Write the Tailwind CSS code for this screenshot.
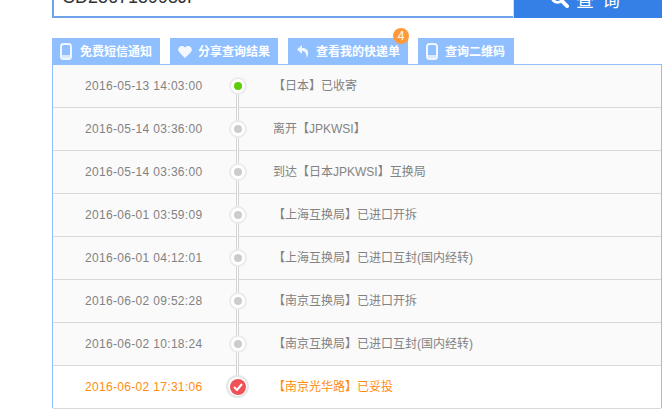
<!DOCTYPE html>
<html>
<head>
<meta charset="utf-8">
<script src="https://cdn.jsdelivr.net/npm/@tailwindcss/browser@4"></script>
</head>
<body class="bg-white overflow-hidden font-['Liberation_Sans','Noto_Sans_CJK_SC',sans-serif]">
<div class="w-[671px] h-[418px] overflow-hidden pl-[52px]">
  <div class="w-[610px] h-[18px] flex items-end overflow-hidden">
    <div class="w-[461px] h-[18px] border-2 border-t-0 border-r-0 border-[#6ea3ea] border-b-2 bg-white relative overflow-hidden">
      <span class="absolute left-[8px] bottom-[7px] text-[18px] leading-[24px] text-[#333]">CD256715998JP</span>
    </div>
    <div class="w-[149px] h-[18px] bg-[#3480e6] border-l border-[#cfdcec] relative overflow-hidden text-white">
      <svg class="absolute left-[36px] top-[-11px]" width="19" height="19" viewBox="0 0 20 20" fill="none" stroke="white" stroke-width="3"><circle cx="8" cy="8" r="6"/><path d="M12.5 12.5 L18 18" stroke-width="4" stroke-linecap="round"/></svg>
      <span class="absolute left-[62px] bottom-[7px] text-[18px] leading-[20px] tracking-[8px]">查询</span>
    </div>
  </div>
  <div class="h-[20px]"></div>
  <div class="flex gap-[10px] h-[26px] w-[610px]">
    <div class="w-[108px] bg-[#8fbfff] flex items-center pl-[8px] gap-[8px] pt-[1px] text-white text-[12px] font-bold">
      <svg width="12" height="17" viewBox="0 0 12 17" fill="none"><rect x="1" y="1" width="10" height="15" rx="2.5" stroke="#eef6ff" stroke-width="2"/><rect x="2" y="12" width="8" height="3" fill="#d9e9ff"/></svg>
      <span>免费短信通知</span>
    </div>
    <div class="w-[108px] bg-[#8fbfff] flex items-center pl-[8px] gap-[6px] pt-[1px] text-white text-[12px] font-bold">
      <svg width="14" height="12" viewBox="0 0 14 12" fill="#f4f8ff"><path d="M7 12 L1 6 C-1 3 1 0 4 0 C5.4 0 6.4 .7 7 1.7 C7.6 .7 8.6 0 10 0 C13 0 15 3 13 6 Z"/></svg>
      <span>分享查询结果</span>
    </div>
    <div class="w-[120px] bg-[#8fbfff] flex items-center pl-[9px] gap-[7px] pt-[1px] text-white text-[12px] font-bold relative">
      <svg width="12" height="13" viewBox="0 0 12 13" fill="#f0f6ff"><path d="M5 0 L0 4.5 L5 9 V6 C8 6 9.5 8 9.5 13 C12 9 12.5 3 5 3 Z"/></svg>
      <span>查看我的快递单</span>
      <div class="absolute right-[-1px] top-[-10px] w-4 h-4 rounded-full bg-[#ff9a3c] text-white text-[12px] font-normal flex items-center justify-center leading-none">4</div>
    </div>
    <div class="w-[96px] bg-[#8fbfff] flex items-center pl-[8px] gap-[7px] pt-[1px] text-white text-[12px] font-bold">
      <svg width="12" height="17" viewBox="0 0 12 17" fill="none"><rect x="1" y="1" width="10" height="15" rx="2.5" stroke="#eef6ff" stroke-width="2"/><rect x="2" y="12" width="8" height="3" fill="#d9e9ff"/></svg>
      <span>查询二维码</span>
    </div>
  </div>
  <div class="w-[610px] border border-[#8fbfff] border-b-0 text-[12px] text-[#828282] relative h-[344px]">
    <div class="absolute z-10 left-[183px] top-[22px] w-[3px] h-[292px] bg-white border-x border-[#d4d4d4]"></div>
    <div class="h-[43px] bg-[#fafafa] border-b border-[#d9d9d9] flex items-center relative"><span class="w-[220px] pl-[32px] tracking-[0.32px]">2016-05-13 14:03:00</span><span>【日本】已收寄</span><div class="absolute z-20 left-[176px] top-[12px] w-[18px] h-[18px] rounded-full bg-white border-2 border-[#ebebeb] flex items-center justify-center"><div class="w-[8px] h-[8px] rounded-full bg-[#5fcc08]"></div></div></div>
    <div class="h-[43px] bg-[#fafafa] border-b border-[#d9d9d9] flex items-center relative"><span class="w-[220px] pl-[32px] tracking-[0.32px]">2016-05-14 03:36:00</span><span>离开【JPKWSI】</span><div class="absolute z-20 left-[176px] top-[12px] w-[18px] h-[18px] rounded-full bg-white border-2 border-[#ebebeb] flex items-center justify-center"><div class="w-[8px] h-[8px] rounded-full bg-[#cccccc]"></div></div></div>
    <div class="h-[43px] bg-[#fafafa] border-b border-[#d9d9d9] flex items-center relative"><span class="w-[220px] pl-[32px] tracking-[0.32px]">2016-05-14 03:36:00</span><span>到达【日本JPKWSI】互换局</span><div class="absolute z-20 left-[176px] top-[12px] w-[18px] h-[18px] rounded-full bg-white border-2 border-[#ebebeb] flex items-center justify-center"><div class="w-[8px] h-[8px] rounded-full bg-[#cccccc]"></div></div></div>
    <div class="h-[43px] bg-[#fafafa] border-b border-[#d9d9d9] flex items-center relative"><span class="w-[220px] pl-[32px] tracking-[0.32px]">2016-06-01 03:59:09</span><span>【上海互换局】已进口开拆</span><div class="absolute z-20 left-[176px] top-[12px] w-[18px] h-[18px] rounded-full bg-white border-2 border-[#ebebeb] flex items-center justify-center"><div class="w-[8px] h-[8px] rounded-full bg-[#cccccc]"></div></div></div>
    <div class="h-[43px] bg-[#fafafa] border-b border-[#d9d9d9] flex items-center relative"><span class="w-[220px] pl-[32px] tracking-[0.32px]">2016-06-01 04:12:01</span><span>【上海互换局】已进口互封(国内经转)</span><div class="absolute z-20 left-[176px] top-[12px] w-[18px] h-[18px] rounded-full bg-white border-2 border-[#ebebeb] flex items-center justify-center"><div class="w-[8px] h-[8px] rounded-full bg-[#cccccc]"></div></div></div>
    <div class="h-[43px] bg-[#fafafa] border-b border-[#d9d9d9] flex items-center relative"><span class="w-[220px] pl-[32px] tracking-[0.32px]">2016-06-02 09:52:28</span><span>【南京互换局】已进口开拆</span><div class="absolute z-20 left-[176px] top-[12px] w-[18px] h-[18px] rounded-full bg-white border-2 border-[#ebebeb] flex items-center justify-center"><div class="w-[8px] h-[8px] rounded-full bg-[#cccccc]"></div></div></div>
    <div class="h-[43px] bg-[#fafafa] border-b border-[#d9d9d9] flex items-center relative"><span class="w-[220px] pl-[32px] tracking-[0.32px]">2016-06-02 10:18:24</span><span>【南京互换局】已进口互封(国内经转)</span><div class="absolute z-20 left-[176px] top-[12px] w-[18px] h-[18px] rounded-full bg-white border-2 border-[#ebebeb] flex items-center justify-center"><div class="w-[8px] h-[8px] rounded-full bg-[#cccccc]"></div></div></div>
    <div class="h-[43px] bg-white border-b border-[#d9d9d9] flex items-center relative text-[#ff8c0f]"><span class="w-[220px] pl-[32px] tracking-[0.32px]">2016-06-02 17:31:06</span><span>【南京光华路】已妥投</span><div class="absolute z-20 left-[173px] top-[9px] w-[23px] h-[23px] rounded-full bg-white border-2 border-[#e6e6e6] flex items-center justify-center"><div class="w-[16px] h-[16px] rounded-full bg-[#ee5257] flex items-center justify-center"><svg width="10" height="8" viewBox="0 0 10 8" fill="none" stroke="white" stroke-width="2"><path d="M1 4 L4 7 L9 1"/></svg></div></div></div>
  </div>
</div>
</body>
</html>
